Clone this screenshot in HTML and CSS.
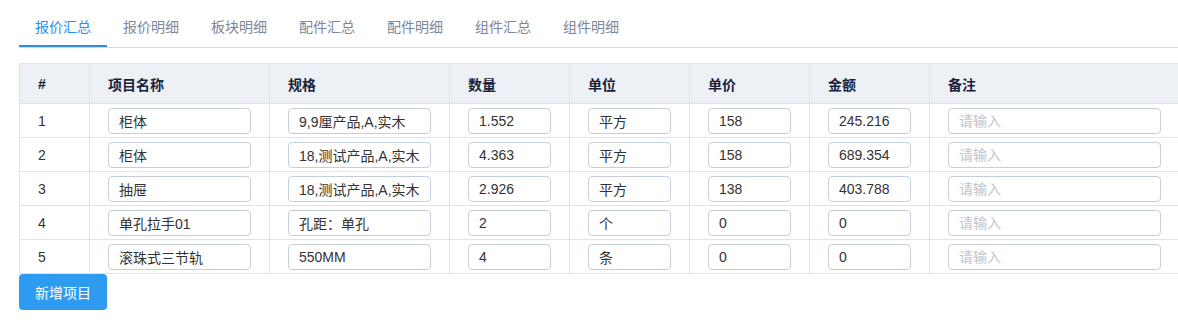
FILE: index.html
```html
<!DOCTYPE html>
<html lang="zh-CN">
<head>
<meta charset="utf-8">
<title>报价汇总</title>
<link rel="stylesheet" href="styles.css">
</head>
<body>
<div class="page">
  <div class="tabs">
    <div class="tab active">报价汇总</div>
    <div class="tab">报价明细</div>
    <div class="tab">板块明细</div>
    <div class="tab">配件汇总</div>
    <div class="tab">配件明细</div>
    <div class="tab">组件汇总</div>
    <div class="tab">组件明细</div>
  </div>
  <table class="grid">
    <colgroup>
      <col class="c-idx"><col class="c-name"><col class="c-spec"><col class="c-num"><col class="c-num"><col class="c-num"><col class="c-num"><col class="c-note">
    </colgroup>
    <thead>
      <tr><th>#</th><th>项目名称</th><th>规格</th><th>数量</th><th>单位</th><th>单价</th><th>金额</th><th>备注</th></tr>
    </thead>
    <tbody>
      <tr><td>1</td><td><input class="field" value="柜体"></td><td><input class="field" value="9,9厘产品,A,实木"></td><td><input class="field" value="1.552"></td><td><input class="field" value="平方"></td><td><input class="field" value="158"></td><td><input class="field" value="245.216"></td><td><input class="field" placeholder="请输入"></td></tr>
      <tr><td>2</td><td><input class="field" value="柜体"></td><td><input class="field" value="18,测试产品,A,实木"></td><td><input class="field" value="4.363"></td><td><input class="field" value="平方"></td><td><input class="field" value="158"></td><td><input class="field" value="689.354"></td><td><input class="field" placeholder="请输入"></td></tr>
      <tr><td>3</td><td><input class="field" value="抽屉"></td><td><input class="field" value="18,测试产品,A,实木"></td><td><input class="field" value="2.926"></td><td><input class="field" value="平方"></td><td><input class="field" value="138"></td><td><input class="field" value="403.788"></td><td><input class="field" placeholder="请输入"></td></tr>
      <tr><td>4</td><td><input class="field" value="单孔拉手01"></td><td><input class="field" value="孔距：单孔"></td><td><input class="field" value="2"></td><td><input class="field" value="个"></td><td><input class="field" value="0"></td><td><input class="field" value="0"></td><td><input class="field" placeholder="请输入"></td></tr>
      <tr><td>5</td><td><input class="field" value="滚珠式三节轨"></td><td><input class="field" value="550MM"></td><td><input class="field" value="4"></td><td><input class="field" value="条"></td><td><input class="field" value="0"></td><td><input class="field" value="0"></td><td><input class="field" placeholder="请输入"></td></tr>
    </tbody>
  </table>
  <button class="btn-add">新增项目</button>
</div>
</body>
</html>
```

FILE: styles.css
```css
html, body {
  margin: 0;
  padding: 0;
  background: #ffffff;
  overflow: hidden;
}
body {
  font-family: "Liberation Sans", "Noto Sans CJK SC", sans-serif;
  font-size: 14px;
  color: #333333;
}
.page {
  padding-left: 19px;
  overflow: hidden;
}
.tabs {
  display: flex;
  border-bottom: 1px solid #d3dae4;
  height: 47px;
}
.tab {
  padding: 0 16px;
  height: 45px;
  line-height: 20px;
  padding-top: 17px;
  box-sizing: border-box;
  height: 47px;
  color: #808695;
  border-bottom: 2px solid transparent;
  cursor: pointer;
}
.tab.active {
  color: #2d8cf0;
  border-bottom-color: #2d8cf0;
}
.grid {
  margin-top: 15px;
  border-collapse: collapse;
  table-layout: fixed;
  width: 1160px;
}
.c-idx { width: 70px; }
.c-name, .c-spec { width: 180px; }
.c-num { width: 120px; }
.c-note { width: 250px; }
.grid th, .grid td {
  border: 1px solid #dfe4eb;
  padding: 0 18px;
  text-align: left;
}
.grid th {
  background: #edf0f5;
  height: 39px;
  font-weight: bold;
  color: #17233d;
}
.grid td {
  height: 33px;
  color: #333333;
}
.field {
  display: block;
  width: 100%;
  height: 26px;
  box-sizing: border-box;
  border: 1px solid #c5cfdc;
  border-radius: 4px;
  padding: 0 10px;
  font-family: inherit;
  font-size: 14px;
  color: #333333;
  background: #ffffff;
  outline: none;
}
.field::placeholder {
  color: #c0c4cc;
}
.btn-add {
  display: block;
  margin-top: 0;
  width: 88px;
  height: 36px;
  border: none;
  border-radius: 4px;
  background: #2d9cf0;
  color: #ffffff;
  font-family: inherit;
  font-size: 14px;
  padding: 0;
}
```
